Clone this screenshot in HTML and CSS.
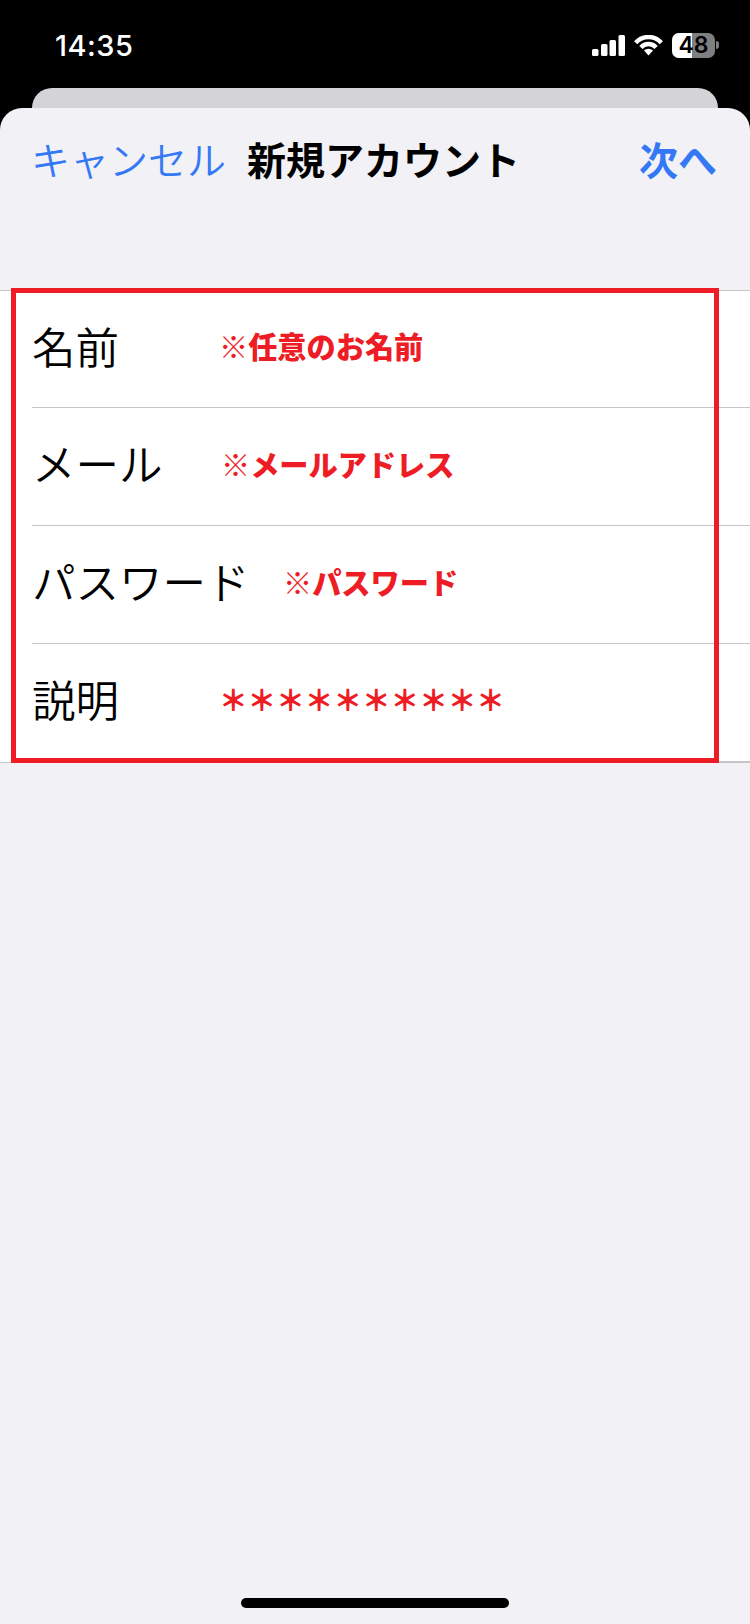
FILE: index.html
```html
<!DOCTYPE html>
<html lang="ja">

<head>
  <meta charset="UTF-8">
  <meta name="viewport" content="width=device-width, initial-scale=1.0">
  <title>新規アカウント</title>
  <link rel="stylesheet" href="styles.css">
</head>

<body>
  <div class="status-bar">
    <span class="time">14:35</span>
    <div class="status-icons">
      <svg class="signal" width="33" height="21" viewBox="0 0 33 21">
        <rect x="0" y="14" width="6.5" height="7" rx="1.5" />
        <rect x="9" y="9" width="6.5" height="12" rx="1.5" />
        <rect x="17.5" y="5" width="6.5" height="16" rx="1.5" />
        <rect x="26.5" y="0" width="6.5" height="21" rx="1.5" />
      </svg>
      <svg class="wifi" width="29" height="21" viewBox="0 0 29 21">
        <path d="M1.7 7.8 A17 17 0 0 1 27.3 7.8" />
        <path d="M6.95 12.44 A10 10 0 0 1 22.05 12.44" />
        <path class="dot" d="M14.5 20.5 L10 15.5 A6.6 6.6 0 0 1 19 15.5 Z" />
      </svg>
      <div class="battery">
        <div class="battery-body"><span class="battery-fill"></span><span class="battery-num">48</span></div>
        <span class="battery-cap"></span>
      </div>
    </div>
  </div>

  <div class="back-sheet"></div>

  <div class="sheet">
    <div class="nav">
      <span class="cancel">キャンセル</span>
      <span class="nav-title">新規アカウント</span>
      <span class="next">次へ</span>
    </div>

    <div class="form">
      <div class="row">
        <div class="label">名前</div>
        <div class="note">※任意のお名前</div>
      </div>
      <div class="row">
        <div class="label">メール</div>
        <div class="note note-mail">※メールアドレス</div>
      </div>
      <div class="row">
        <div class="label label-wide">パスワード</div>
        <div class="note">※パスワード</div>
      </div>
      <div class="row">
        <div class="label">説明</div>
        <div class="note stars">＊＊＊＊＊＊＊＊＊＊</div>
      </div>
      <div class="red-box"></div>
    </div>

    <div class="home-bar"></div>
  </div>
</body>

</html>
```

FILE: styles.css
```css
* {
  margin: 0;
  padding: 0;
  box-sizing: border-box;
}

html,
body {
  height: 100%;
}

body {
  position: relative;
  width: 750px;
  height: 1624px;
  background-color: #000;
  font-family: "Liberation Sans", "Noto Sans CJK JP", sans-serif;
}

/* status bar */
.status-bar {
  display: flex;
  justify-content: space-between;
  align-items: center;
  height: 88px;
  padding: 2px 31px 0 55px;
  color: #fff;
}

.time {
  font-family: Inter, "Liberation Sans", sans-serif;
  font-size: 29px;
  font-weight: 500;
  letter-spacing: 0.5px;
}

.status-icons {
  display: flex;
  align-items: center;
  gap: 9px;
}

.signal rect {
  fill: #fff;
}

.wifi path {
  fill: none;
  stroke: #fff;
  stroke-width: 4.4;
}

.wifi .dot {
  fill: #fff;
  stroke: none;
}

.battery {
  display: flex;
  align-items: center;
  gap: 1px;
}

.battery-body {
  position: relative;
  width: 43px;
  height: 25px;
  border-radius: 7px;
  background-color: #7f7f7f;
}

.battery-fill {
  position: absolute;
  left: 0;
  top: 0;
  bottom: 0;
  width: 20px;
  border-radius: 7px 0 0 7px;
  background-color: #fff;
}

.battery-num {
  position: absolute;
  left: 0;
  right: 0;
  top: 0;
  text-align: center;
  line-height: 25px;
  font-family: Inter, "Liberation Sans", sans-serif;
  font-size: 23px;
  font-weight: 600;
  color: #000;
}

.battery-cap {
  width: 3px;
  height: 8px;
  border-radius: 0 3px 3px 0;
  background-color: #7f7f7f;
}

/* sheets */
.back-sheet {
  height: 40px;
  margin: 0 32px -20px 32px;
  border-radius: 20px 20px 0 0;
  background-color: #d3d3d8;
}

.sheet {
  position: relative;
  height: 1516px;
  border-radius: 22px 22px 0 0;
  background-color: #f1f1f6;
}

.nav {
  display: flex;
  align-items: center;
  height: 104px;
  padding: 0 33px 4px 31px;
  font-size: 39px;
}

.cancel {
  font-weight: 350;
  color: #3478f6;
}

.nav-title {
  margin-left: 21px;
  font-weight: 700;
  color: #000;
}

.next {
  margin-left: auto;
  font-weight: 700;
  color: #3478f6;
}

/* form */
.form {
  position: relative;
  margin-top: 78px;
  background-color: #fff;
  border-top: 1px solid #c6c6c8;
  border-bottom: 1px solid #c6c6c8;
}

.row {
  display: flex;
  align-items: center;
  height: 118px;
  margin-left: 32px;
  padding-bottom: 8px;
  border-bottom: 1px solid #c6c6c8;
}

.row:first-child,
.row:last-of-type {
  height: 117px;
}

.row:last-of-type {
  border-bottom: none;
}

.label {
  width: 187px;
  font-size: 43.5px;
  font-weight: 350;
  color: #000;
}

.label-wide {
  width: 251px;
}

.note {
  font-size: 29.2px;
  font-weight: 900;
  color: #ee1c25;
}

.note-mail {
  margin-left: 2px;
}

.stars {
  font-size: 28.6px;
}

.red-box {
  position: absolute;
  left: 11px;
  top: -3px;
  width: 708px;
  bottom: -1px;
  border: 5px solid #ee1c25;
}

.home-bar {
  position: absolute;
  left: 241px;
  bottom: 16px;
  width: 268px;
  height: 10px;
  border-radius: 5px;
  background-color: #000;
}
```
